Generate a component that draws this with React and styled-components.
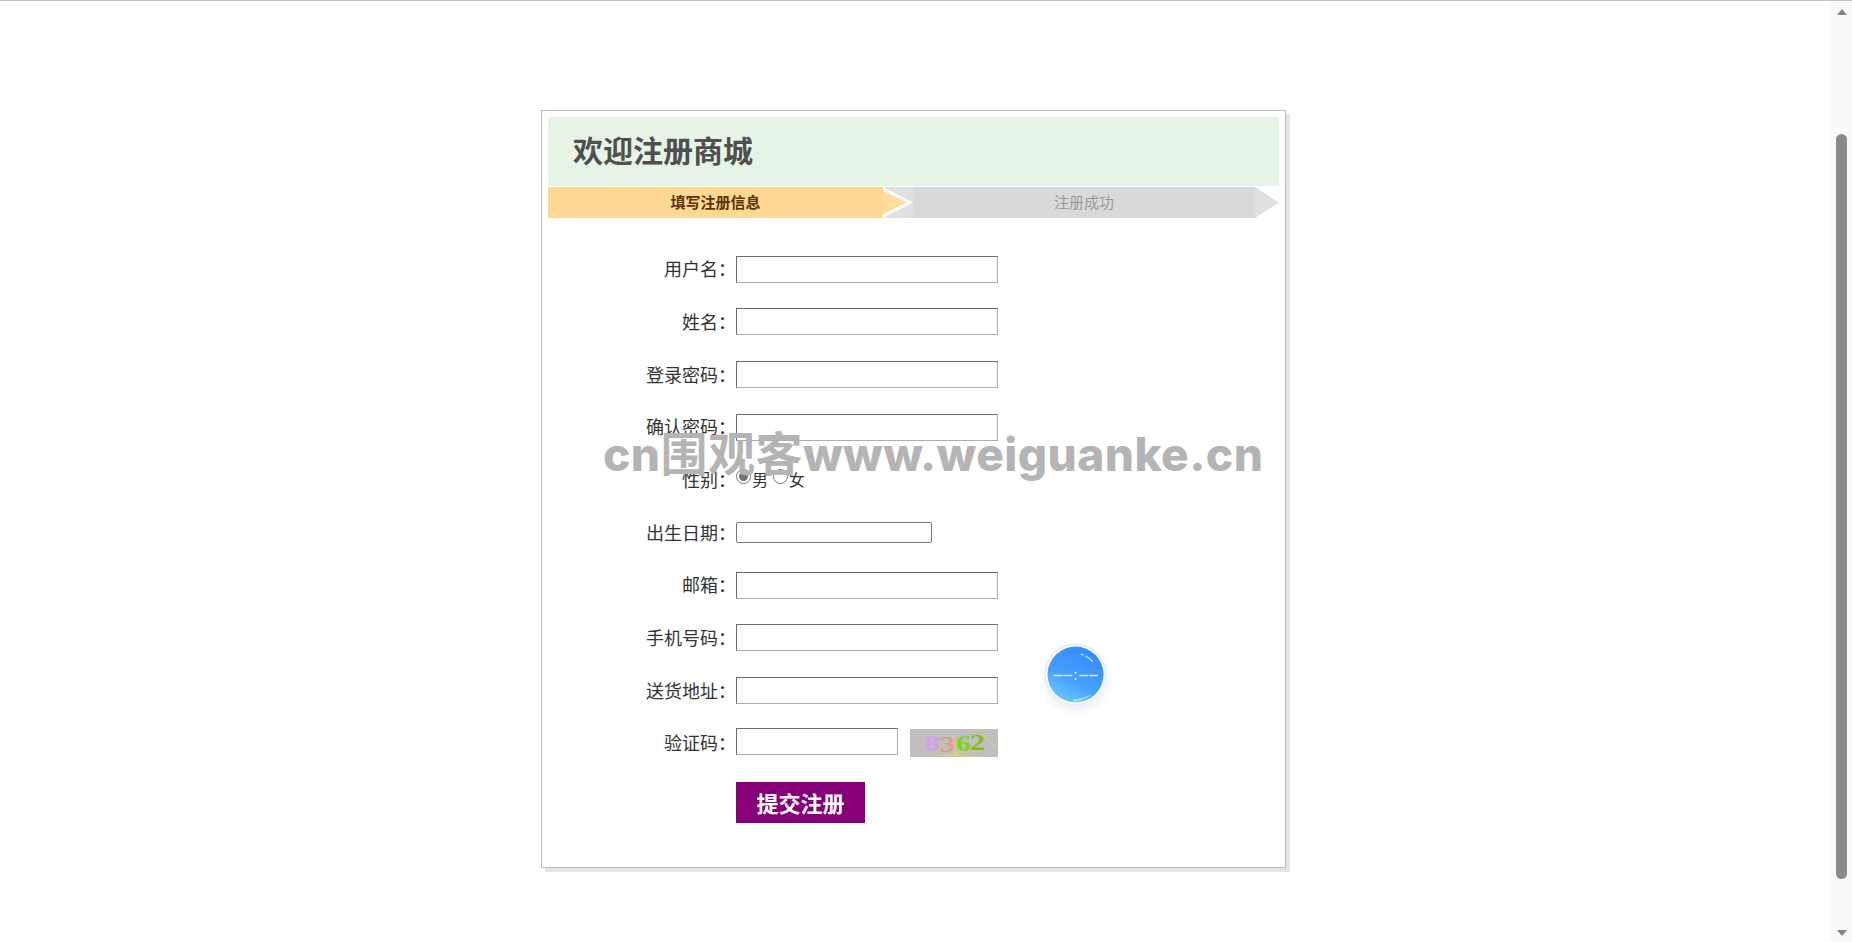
import React from "react";
import styled, { createGlobalStyle } from "styled-components";

const GlobalStyle = createGlobalStyle`
  html, body {
    margin: 0;
    padding: 0;
    height: 942px;
    overflow: hidden;
    background: #fff;
    font-family: "Liberation Sans", "Noto Sans CJK SC", sans-serif;
  }
`;

const textFields = [
  { label: "用户名" },
  { label: "姓名" },
  { label: "登录密码" },
  { label: "确认密码" },
];
const lowerFields = [
  { label: "邮箱" },
  { label: "手机号码" },
  { label: "送货地址" },
];
const captchaDigits = [
  { ch: "8", x: 15, y: 22, fill: "#d69ef0" },
  { ch: "3", x: 30, y: 23, fill: "#e89a8c" },
  { ch: "6", x: 46, y: 22, fill: "#78d810" },
  { ch: "2", x: 60, y: 21, fill: "#88c010" },
];

export default function App() {
  return (
    <Page>
      <GlobalStyle />
      <Main>
        <Card>
          <Title>欢迎注册商城</Title>
          <Steps>
            <StepOn>填写注册信息</StepOn>
            <ArrowJoint>
              <ArrowWhite />
              <ArrowOrange />
            </ArrowJoint>
            <StepOff>注册成功</StepOff>
            <ArrowEnd />
          </Steps>
          <Form>
            {textFields.map((f) => (
              <Row key={f.label}>
                <Label>{f.label}：</Label>
                <TextInput type="text" />
              </Row>
            ))}
            <Row>
              <Label>性别：</Label>
              <Radios>
                <Radio type="radio" name="sex" defaultChecked />
                <RadioText>男</RadioText>
                <Radio type="radio" name="sex" />
                <RadioText>女</RadioText>
              </Radios>
            </Row>
            <Row>
              <Label>出生日期：</Label>
              <DateInput type="text" />
            </Row>
            {lowerFields.map((f) => (
              <Row key={f.label}>
                <Label>{f.label}：</Label>
                <TextInput type="text" />
              </Row>
            ))}
            <Row>
              <Label>验证码：</Label>
              <CodeInput type="text" />
              <Captcha viewBox="0 0 88 28">
                <rect width="88" height="28" fill="#bfbfbf" />
                <path d="M20 27 L44 8 M40 27 L60 20 M72 5 L86 18 M40 10 L48 28 M30 26 L70 28" stroke="#e6e04a" strokeWidth="0.8" fill="none" />
                {captchaDigits.map((d) => (
                  <text
                    key={d.ch}
                    x={d.x}
                    y={d.y}
                    fill={d.fill}
                    fontSize="23"
                    fontWeight="700"
                    fontFamily="Liberation Serif, serif"
                    textLength="15"
                    lengthAdjust="spacingAndGlyphs"
                  >
                    {d.ch}
                  </text>
                ))}
              </Captcha>
            </Row>
            <SubmitRow>
              <Submit type="button">提交注册</Submit>
            </SubmitRow>
          </Form>
        </Card>
      </Main>
      <Scrollbar>
        <ScrollUp />
        <ScrollThumb />
        <ScrollDown />
      </Scrollbar>
      <Watermark>
        cn<WatermarkCjk>围观客</WatermarkCjk>www.weiguanke.cn
      </Watermark>
      <Timer>
        <svg width="62" height="63" viewBox="0 0 62 63">
          <defs>
            <linearGradient id="clock" x1="0.75" y1="0" x2="0.25" y2="1">
              <stop offset="0" stopColor="#3388ff" />
              <stop offset="0.6" stopColor="#46a0ff" />
              <stop offset="1" stopColor="#6cc8ff" />
            </linearGradient>
          </defs>
          <circle cx="30.5" cy="31.5" r="31" fill="#e4edf7" />
          <circle cx="30.5" cy="31.5" r="29.500" fill="#fff" />
          <circle cx="30.5" cy="31.5" r="28" fill="url(#clock)" />
          <path d="M8.300 32.500 H17.600 M18.300 32.500 H27.300 M34.300 32.500 H43.300 M44 32.500 H53" stroke="#dcebff" strokeWidth="1.6" fill="none" />
          <circle cx="30.500" cy="29.700" r="1" fill="#fff" />
          <circle cx="30.500" cy="36" r="1" fill="#fff" />
          <path d="M35.700 11 L38.500 12 M40.500 13 C43.500 14.500 46 16.500 47.700 18.700" stroke="#e8f2ff" strokeWidth="1.1" fill="none" />
          <path d="M28 56.500 C34 55.500 41 54 46.700 51.700 C42 55 35 58.500 28 59 Z" fill="#a8dcff" />
        </svg>
      </Timer>
    </Page>
  );
}

const Page = styled.div`
  position: relative;
  display: flex;
  box-sizing: border-box;
  height: 942px;
  border-top: 1px solid #c4c4c4;
  overflow: hidden;
`;

const Main = styled.div`
  flex: 1;
  padding: 109px 0 0 541px;
`;

const Card = styled.div`
  box-sizing: border-box;
  width: 745px;
  height: 758px;
  padding: 6px;
  background: #fff;
  border: 1px solid #bdbdbd;
  box-shadow: 4px 4px 0 #e4e4e4;
`;

const Title = styled.h1`
  box-sizing: border-box;
  height: 69px;
  margin: 0 0 1px;
  padding-left: 25px;
  background: #e6f4e6;
  color: #4f4f4f;
  font-size: 30px;
  font-weight: 700;
  line-height: 69px;
`;

const Steps = styled.div`
  display: flex;
  height: 31px;
  font-size: 15px;
  line-height: 31px;
  text-align: center;
`;

const StepOn = styled.div`
  width: 335px;
  background: #ffd993;
  color: #5c3200;
  font-weight: 700;
`;

const StepOff = styled.div`
  width: 342px;
  background: #d9d9d9;
  color: #999;
`;

const ArrowJoint = styled.div`
  position: relative;
  width: 30px;
  background: #e0e0e0;
`;

const ArrowWhite = styled.div`
  position: absolute;
  inset: 0;
  background: #fff;
  clip-path: polygon(0 0, 100% 50%, 0 100%);
`;

const ArrowOrange = styled.div`
  position: absolute;
  inset: 0 6px 0 0;
  background: #ffdb9c;
  clip-path: polygon(0 12%, 100% 50%, 0 88%);
`;

const ArrowEnd = styled.div`
  width: 24px;
  background: #e0e0e0;
  clip-path: polygon(0 0, 100% 50%, 0 100%);
`;

const Form = styled.div`
  padding-top: 25px;
`;

const Row = styled.div`
  display: flex;
  align-items: center;
  height: 52.67px;
`;

const Label = styled.label`
  width: 188px;
  margin-bottom: 2px;
  color: #333;
  font-size: 18px;
  text-align: right;
`;

const TextInput = styled.input`
  box-sizing: border-box;
  width: 262px;
  height: 27px;
  margin: 0;
  padding: 0 2px;
  background: #fff;
  border: 1px solid;
  border-color: #6b6b6b #adadad #adadad #6b6b6b;
`;

const DateInput = styled.input`
  box-sizing: border-box;
  width: 196px;
  height: 21px;
  margin: 0;
  background: #fff;
  border: 1px solid #767676;
  border-radius: 2px;
`;

const CodeInput = styled(TextInput)`
  width: 162px;
  margin: -3px 12px 0 0;
`;

const Captcha = styled.svg`
  display: block;
  width: 88px;
  height: 28px;
`;

const Radios = styled.div`
  display: flex;
  align-items: center;
`;

const Radio = styled.input`
  width: 15px;
  height: 15px;
  margin: -7px 1px 0 0;
  accent-color: #757575;
`;

const RadioText = styled.span`
  width: 21px;
  color: #333;
  font-size: 16px;
  margin-bottom: 2px;
`;

const SubmitRow = styled.div`
  padding: 12px 0 0 188px;
`;

const Submit = styled.button`
  display: block;
  width: 129px;
  height: 41px;
  padding: 0;
  background: #87007a;
  border: 0;
  color: #fff;
  font-family: inherit;
  font-size: 22px;
  font-weight: 700;
`;

const Scrollbar = styled.div`
  display: flex;
  flex-direction: column;
  align-items: center;
  width: 21px;
  background: #fafafa;
`;

const ScrollUp = styled.div`
  width: 0;
  height: 0;
  margin: 8px 0 0;
  border: 5px solid transparent;
  border-top: 0;
  border-bottom: 6px solid #848484;
`;

const ScrollThumb = styled.div`
  width: 11px;
  height: 745px;
  margin: 119px 0 0;
  background: #8a8a8a;
  border-radius: 6px;
`;

const ScrollDown = styled.div`
  width: 0;
  height: 0;
  margin: 51px 0 0;
  border: 5px solid transparent;
  border-bottom: 0;
  border-top: 6px solid #848484;
`;

const Watermark = styled.div`
  position: absolute;
  left: 603px;
  top: 420px;
  color: #b4b4b4;
  font-family: "Inter", sans-serif;
  font-size: 46px;
  font-weight: 800;
  letter-spacing: 0.45px;
  line-height: 60px;
  white-space: nowrap;
`;

const WatermarkCjk = styled.span`
  font-family: "Noto Sans CJK SC", sans-serif;
  font-size: 47px;
  font-weight: 700;
`;

const Timer = styled.div`
  position: absolute;
  left: 1045px;
  top: 642px;
  width: 62px;
  height: 63px;
  border-radius: 50%;
  box-shadow: 0 4px 10px rgba(120, 150, 190, 0.18);

  svg {
    display: block;
  }
`;
